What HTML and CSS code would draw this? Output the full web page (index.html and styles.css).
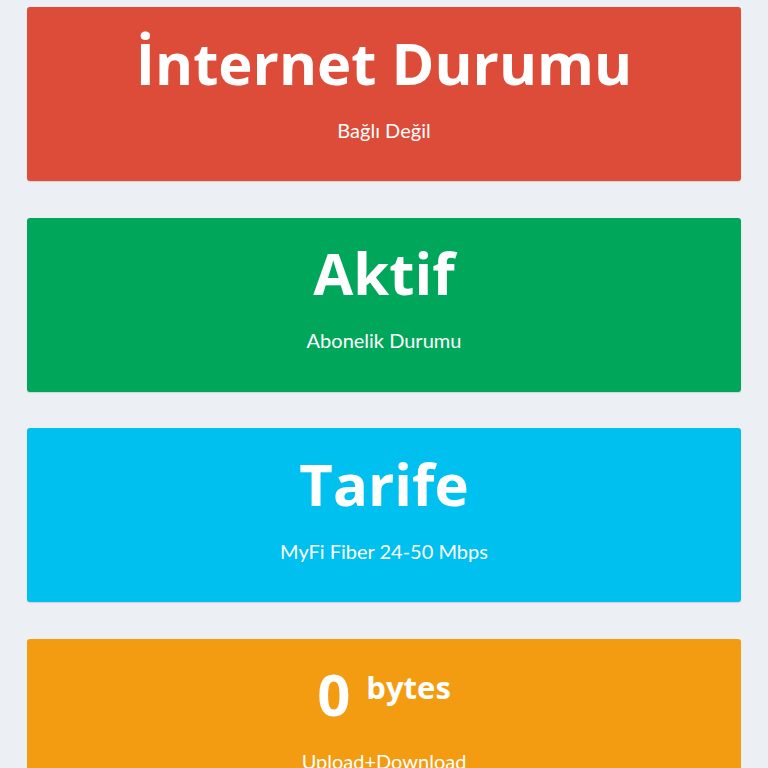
FILE: index.html
```html
<!DOCTYPE html>
<html lang="tr">
<head>
<meta charset="utf-8">
<title>Durum</title>
<link rel="stylesheet" href="styles.css">
</head>
<body>
<main class="boxes">
  <section class="small-box bg-red">
    <h3 class="title">İnternet Durumu</h3>
    <p class="caption">Bağlı Değil</p>
  </section>
  <section class="small-box bg-green">
    <h3 class="title">Aktif</h3>
    <p class="caption">Abonelik Durumu</p>
  </section>
  <section class="small-box bg-aqua">
    <h3 class="title">Tarife</h3>
    <p class="caption">MyFi Fiber 24-50 Mbps</p>
  </section>
  <section class="small-box bg-yellow">
    <h3 class="title">0<sup class="unit">bytes</sup></h3>
    <p class="caption">Upload+Download</p>
  </section>
</main>
</body>
</html>
```

FILE: styles.css
```css
html, body {
  margin: 0;
  padding: 0;
}
body {
  background: #ecf0f5;
  font-family: Lato, "Noto Sans", "Liberation Sans", sans-serif;
  color: #fff;
  font-variant-ligatures: none;
}
.boxes {
  display: flex;
  flex-direction: column;
  gap: 36.5px;
  padding: 7px 27px 40px;
}
.small-box {
  height: 174px;
  box-sizing: border-box;
  border-radius: 3px;
  box-shadow: 0 1px 1px rgba(0, 0, 0, 0.12);
  padding-top: 19.5px;
  text-align: center;
  display: flex;
  flex-direction: column;
  align-items: center;
}
.bg-red { background: #dd4b39; }
.bg-green { background: #00a65a; }
.bg-aqua { background: #00c0ef; }
.bg-yellow { background: #f39c12; }
.title {
  margin: 0;
  font-family: "Open Sans", "Noto Sans", sans-serif;
  font-size: 58px;
  line-height: 72px;
  font-weight: 700;
  white-space: nowrap;
}
.unit {
  font-size: 31px;
  vertical-align: 17px;
  line-height: 0;
  margin-left: 16px;
}
.caption {
  margin: 17px 0 0;
  font-size: 20px;
  line-height: 28px;
  font-weight: 400;
}
```
